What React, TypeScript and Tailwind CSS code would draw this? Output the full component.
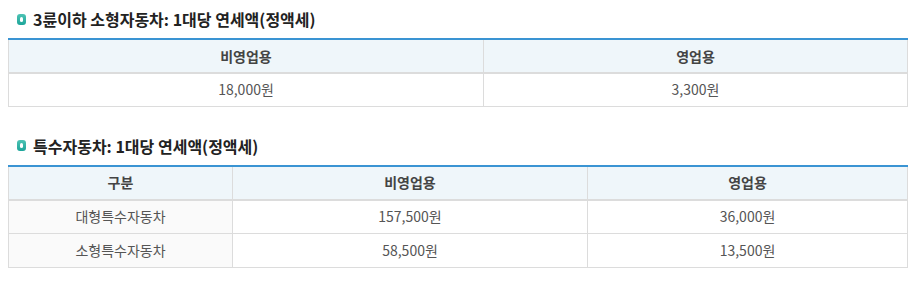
const font = { fontFamily: '"Noto Sans CJK KR", "Noto Sans", sans-serif' };

function TitleIcon() {
  return (
    <span className="relative inline-flex h-[11px] w-[9px] items-center justify-center rounded-[3px] bg-gradient-to-b from-[#4cc3b4] to-[#1aa59a]">
      <span className="h-[5px] w-[3px] rounded-full bg-white" />
    </span>
  );
}

function Title({ text }: { text: string }) {
  return (
    <h2 className="flex h-[20px] items-center gap-[7px] pl-[9px] text-[16px] font-bold leading-none text-[#222]">
      <TitleIcon />
      <span>{text}</span>
    </h2>
  );
}

const th =
  "h-[34px] border-r border-[#dcdcdc] bg-[#eff6fa] p-0 text-center text-[14px] font-bold text-[#444] last:border-r-0";
const td = "border-r border-[#dcdcdc] p-0 text-center text-[14px] text-[#555] last:border-r-0";

function App() {
  const special = [
    { name: "대형특수자동차", a: "157,500원", b: "36,000원" },
    { name: "소형특수자동차", a: "58,500원", b: "13,500원" },
  ];

  return (
    <div className="h-[285px] w-[916px] bg-white px-[8px] pt-[9px]" style={font}>
      <Title text="3륜이하 소형자동차: 1대당 연세액(정액세)" />
      <table className="mt-[9px] w-[900px] table-fixed border-collapse border-x border-b border-[#dcdcdc]">
        <thead>
          <tr className="border-t-2 border-b-2 border-t-[#3a94d3] border-b-[#dcdcdc]">
            <th className={th + " w-[475px]"}>비영업용</th>
            <th className={th}>영업용</th>
          </tr>
        </thead>
        <tbody>
          <tr>
            <td className={td + " h-[33px]"}>18,000원</td>
            <td className={td + " h-[33px]"}>3,300원</td>
          </tr>
        </tbody>
      </table>

      <div className="mt-[29px]">
        <Title text="특수자동차: 1대당 연세액(정액세)" />
      </div>
      <table className="mt-[9px] w-[900px] table-fixed border-collapse border-x border-b border-[#dcdcdc]">
        <thead>
          <tr className="border-t-2 border-b-2 border-t-[#3a94d3] border-b-[#dcdcdc]">
            <th className={th + " w-[224px]"}>구분</th>
            <th className={th + " w-[355px]"}>비영업용</th>
            <th className={th}>영업용</th>
          </tr>
        </thead>
        <tbody>
          {special.map((row, i) => (
            <tr key={row.name} className={i > 0 ? "border-t border-[#dcdcdc]" : ""}>
              <td className={td + " h-[34px] bg-[#fafafa]"}>{row.name}</td>
              <td className={td + " h-[34px]"}>{row.a}</td>
              <td className={td + " h-[34px]"}>{row.b}</td>
            </tr>
          ))}
        </tbody>
      </table>
    </div>
  );
}

export default App;
